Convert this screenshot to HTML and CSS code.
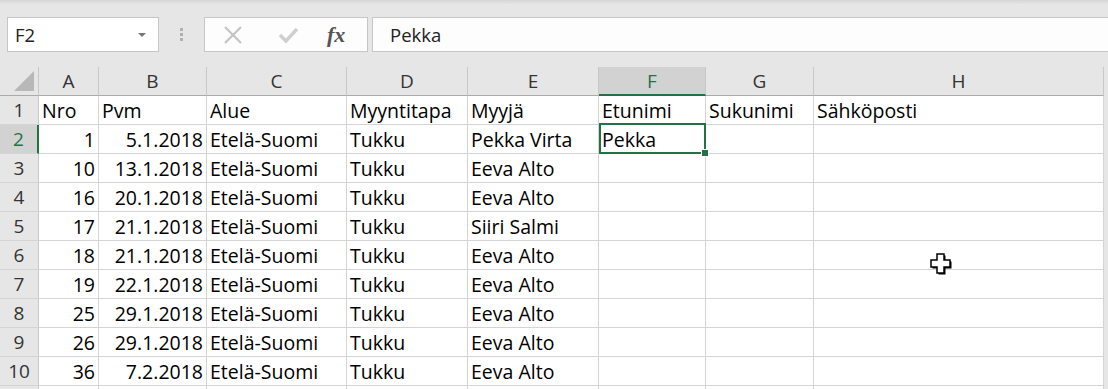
FILE: index.html
```html
<!DOCTYPE html>
<html>
<head>
<meta charset="utf-8">
<link rel="stylesheet" href="styles.css">
</head>
<body>
<div class="app">
  <div class="topband"></div>
  <div class="toolbar">
    <div class="namebox"><span class="name">F2</span><span class="caret"></span></div>
    <div class="grip"><i></i><i></i><i></i></div>
    <div class="fxbox">
      <svg class="ico" width="22" height="22" viewBox="0 0 22 22"><path d="M3 3 L19 19 M19 3 L3 19" stroke="#c4c4c4" stroke-width="2.2" fill="none"/></svg>
      <svg class="ico" width="22" height="22" viewBox="0 0 22 22"><path d="M3 11 L9 17 L20 5" stroke="#cfcfcf" stroke-width="3.4" fill="none"/></svg>
      <span class="fx">fx</span>
    </div>
    <div class="formula">Pekka</div>
  </div>
  <div class="sheet">
    <div class="corner"><svg width="24" height="24" viewBox="0 0 24 24"><polygon points="2,22 22,22 22,2" fill="#b8b8b8"/></svg></div>
    <div class="ch">A</div><div class="ch">B</div><div class="ch">C</div><div class="ch">D</div><div class="ch">E</div><div class="ch sel">F</div><div class="ch">G</div><div class="ch">H</div><div class="pad"></div>

    <div class="rh">1</div><div class="c">Nro</div><div class="c">Pvm</div><div class="c">Alue</div><div class="c">Myyntitapa</div><div class="c">Myyjä</div><div class="c">Etunimi</div><div class="c">Sukunimi</div><div class="c">Sähköposti</div><div class="pad"></div>

    <div class="rh rsel">2</div><div class="c n">1</div><div class="c n">5.1.2018</div><div class="c">Etelä-Suomi</div><div class="c">Tukku</div><div class="c">Pekka Virta</div><div class="c active">Pekka</div><div class="c"></div><div class="c"></div><div class="pad"></div>

    <div class="rh">3</div><div class="c n">10</div><div class="c n">13.1.2018</div><div class="c">Etelä-Suomi</div><div class="c">Tukku</div><div class="c">Eeva Alto</div><div class="c"></div><div class="c"></div><div class="c"></div><div class="pad"></div>

    <div class="rh">4</div><div class="c n">16</div><div class="c n">20.1.2018</div><div class="c">Etelä-Suomi</div><div class="c">Tukku</div><div class="c">Eeva Alto</div><div class="c"></div><div class="c"></div><div class="c"></div><div class="pad"></div>

    <div class="rh">5</div><div class="c n">17</div><div class="c n">21.1.2018</div><div class="c">Etelä-Suomi</div><div class="c">Tukku</div><div class="c">Siiri Salmi</div><div class="c"></div><div class="c"></div><div class="c"></div><div class="pad"></div>

    <div class="rh">6</div><div class="c n">18</div><div class="c n">21.1.2018</div><div class="c">Etelä-Suomi</div><div class="c">Tukku</div><div class="c">Eeva Alto</div><div class="c"></div><div class="c"></div><div class="c"></div><div class="pad"></div>

    <div class="rh">7</div><div class="c n">19</div><div class="c n">22.1.2018</div><div class="c">Etelä-Suomi</div><div class="c">Tukku</div><div class="c">Eeva Alto</div><div class="c"></div><div class="c"></div><div class="c"></div><div class="pad"></div>

    <div class="rh">8</div><div class="c n">25</div><div class="c n">29.1.2018</div><div class="c">Etelä-Suomi</div><div class="c">Tukku</div><div class="c">Eeva Alto</div><div class="c"></div><div class="c"></div><div class="c"></div><div class="pad"></div>

    <div class="rh">9</div><div class="c n">26</div><div class="c n">29.1.2018</div><div class="c">Etelä-Suomi</div><div class="c">Tukku</div><div class="c">Eeva Alto</div><div class="c"></div><div class="c"></div><div class="c"></div><div class="pad"></div>

    <div class="rh">10</div><div class="c n">36</div><div class="c n">7.2.2018</div><div class="c">Etelä-Suomi</div><div class="c">Tukku</div><div class="c">Eeva Alto</div><div class="c"></div><div class="c"></div><div class="c"></div><div class="pad"></div>

    <div class="rh"></div><div class="c"></div><div class="c"></div><div class="c"></div><div class="c"></div><div class="c"></div><div class="c"></div><div class="c"></div><div class="c"></div><div class="pad"></div>
  </div>
  <svg class="cursor" width="24" height="24" viewBox="0 0 24 24">
    <polygon points="8,2 15,2 15,8 21,8 21,15 15,15 15,21 8,21 8,15 2,15 2,8 8,8" fill="#000" transform="translate(1.5,1.5)"/>
    <polygon points="8,2 15,2 15,8 21,8 21,15 15,15 15,21 8,21 8,15 2,15 2,8 8,8" fill="#fff" stroke="#000" stroke-width="1.5"/>
  </svg>
</div>
</body>
</html>
```
FILE: styles.css
```css
html, body { margin: 0; padding: 0; }
body {
  background: #e6e6e6;
  font-family: "Open Sans", "Liberation Sans", sans-serif;
  color: #000;
  width: 1108px;
  height: 389px;
  overflow: hidden;
}
.app { position: relative; width: 1108px; height: 389px; overflow: hidden; }
.topband {
  height: 4px;
  background: linear-gradient(#d6d6d6, #e3e3e3);
}
.toolbar {
  display: flex;
  align-items: stretch;
  height: 35px;
  margin-top: 13px;
  padding-left: 7px;
}
.namebox {
  box-sizing: border-box;
  width: 152px;
  background: #fff;
  border: 1px solid #c6c6c6;
  display: flex;
  align-items: center;
  justify-content: space-between;
  padding: 0 12px 0 7px;
}
.name { font-size: 18.5px; color: #222; }
.caret {
  width: 0; height: 0;
  border-left: 4px solid transparent;
  border-right: 4px solid transparent;
  border-top: 4px solid #777;
}
.grip {
  width: 45px;
  display: flex;
  flex-direction: column;
  align-items: center;
  justify-content: center;
  gap: 2px;
}
.grip i { display: block; width: 3px; height: 3px; background: #b0b0b0; }
.fxbox {
  box-sizing: border-box;
  width: 164px;
  background: #fdfdfd;
  border: 1px solid #c6c6c6;
  display: flex;
  align-items: center;
  padding-left: 17px;
  gap: 33px;
}
.ico { display: block; }
.fx {
  font-family: "Liberation Serif", "DejaVu Serif", serif;
  font-style: italic;
  font-weight: bold;
  font-size: 22px;
  color: #555;
  margin-left: -5px;
}
.formula {
  box-sizing: border-box;
  flex: 1;
  margin-left: 4px;
  background: #fdfdfd;
  border: 1px solid #c6c6c6;
  border-right: none;
  font-size: 18.5px;
  color: #222;
  display: flex;
  align-items: center;
  padding-left: 17px;
}
.sheet {
  margin-top: 15px;
  display: grid;
  grid-template-columns: 39px 60px 108px 140px 121px 131px 107px 108px 290px 4px;
  grid-template-rows: repeat(12, 29px);
  background: #fff;
}
.sheet > div { box-sizing: border-box; }
.corner {
  background: #e6e6e6;
  border-right: 1px solid #c8c8c8;
  border-bottom: 1px solid #ababab;
  display: flex;
  align-items: flex-end;
  justify-content: flex-end;
  padding: 0 2px 2px 0;
}
.corner svg { display: block; }
.ch {
  background: #e6e6e6;
  border-right: 1px solid #c8c8c8;
  border-bottom: 1px solid #ababab;
  text-align: center;
  font-size: 19px;
  line-height: 29px;
  color: #333;
}
.ch.sel {
  background: #d2d2d2;
  color: #217346;
  border-bottom: 2px solid #217346;
}
.pad { background: #e6e6e6; }
.rh {
  background: #e6e6e6;
  border-right: 1px solid #c8c8c8;
  border-bottom: 1px solid #d4d4d4;
  text-align: center;
  font-size: 19px;
  line-height: 29px;
  color: #333;
}
.rh.rsel {
  background: #d2d2d2;
  color: #217346;
  border-right: 2px solid #217346;
}
.c {
  border-right: 1px solid #d4d4d4;
  border-bottom: 1px solid #d4d4d4;
  font-size: 19.5px;
  line-height: 29px;
  padding: 0 3px;
  white-space: nowrap;
  overflow: visible;
}
.c.n { text-align: right; }
.c.active { position: relative; }
.c.active::after {
  content: "";
  position: absolute;
  left: 0; top: -2px; right: -1px; bottom: -1px;
  border: 2px solid #217346;
}
.c.active::before {
  content: "";
  position: absolute;
  right: -4px; bottom: -4px;
  width: 6px; height: 6px;
  background: #217346;
  border: 1px solid #fff;
  z-index: 2;
}
.cursor {
  position: absolute;
  left: 929px;
  top: 252px;
}
```
